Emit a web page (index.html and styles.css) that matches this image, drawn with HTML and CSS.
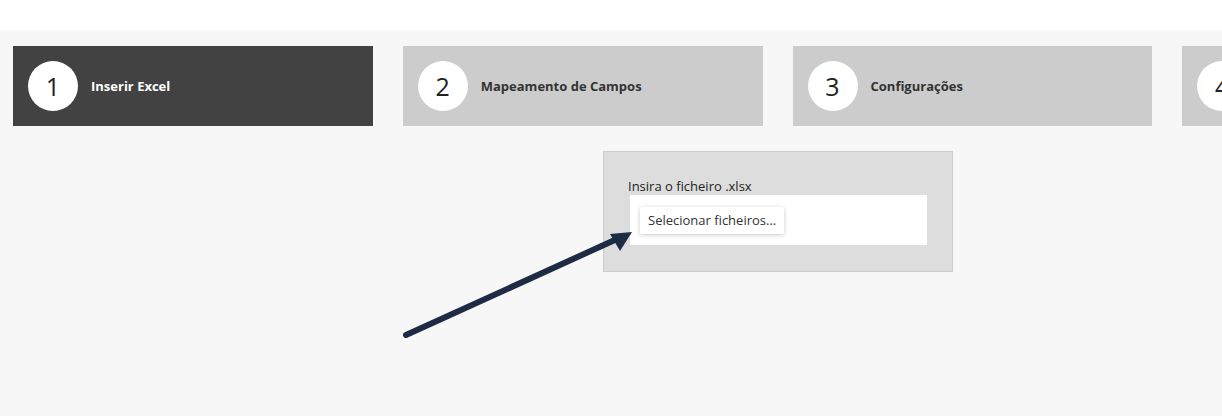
FILE: index.html
```html
<!DOCTYPE html>
<html lang="pt">
<head>
<meta charset="utf-8">
<link rel="stylesheet" href="styles.css">
</head>
<body>
<div class="topbar"></div>
<main class="main">
  <div class="steps">
    <div class="step active"><span class="num">1</span><span class="title">Inserir Excel</span></div>
    <div class="step"><span class="num">2</span><span class="title">Mapeamento de Campos</span></div>
    <div class="step"><span class="num">3</span><span class="title">Configurações</span></div>
    <div class="step"><span class="num">4</span></div>
  </div>
  <div class="panel">
    <label class="label">Insira o ficheiro .xlsx</label>
    <div class="input">
      <span class="btn">Selecionar ficheiros...</span>
    </div>
  </div>
</main>
<svg class="arrow" width="1222" height="416" viewBox="0 0 1222 416">
  <line x1="406" y1="335" x2="617" y2="239" stroke="#1e2b45" stroke-width="6" stroke-linecap="round"/>
  <polygon points="632,232 610,234 620,251" fill="#1e2b45"/>
</svg>
</body>
</html>
```
FILE: styles.css
```css
html, body {
  margin: 0;
  padding: 0;
}
body {
  width: 1222px;
  height: 416px;
  overflow: hidden;
  background: #f7f7f7;
  font-family: "Open Sans", "Liberation Sans", sans-serif;
  position: relative;
}
.topbar {
  height: 30px;
  background: #ffffff;
}
.main {
  padding: 16px 0 0 13px;
}
.steps {
  display: flex;
  gap: 30px;
  white-space: nowrap;
  overflow: hidden;
}
.step {
  flex: 0 0 359.75px;
  height: 80px;
  background: #cccccc;
  display: flex;
  align-items: center;
  padding-left: 15px;
  box-sizing: border-box;
  color: #333333;
}
.step.active {
  background: #424242;
  color: #ffffff;
}
.num {
  width: 50px;
  height: 50px;
  border-radius: 50%;
  background: #ffffff;
  color: #222222;
  font-size: 25px;
  display: flex;
  align-items: center;
  justify-content: center;
  flex-shrink: 0;
}
.title {
  margin-left: 13px;
  font-size: 13px;
  font-weight: 700;
}
.panel {
  margin: 25px 0 0 590px;
  width: 350px;
  box-sizing: border-box;
  border: 1px solid #cccccc;
  background: #dddddd;
  padding: 25px 24px 26px 24px;
}
.label {
  display: block;
  font-size: 13px;
  line-height: 18px;
  color: #222222;
}
.input {
  margin-left: 2px;
  width: 297px;
  height: 50px;
  background: #ffffff;
  box-sizing: border-box;
  padding: 12px 10px;
}
.btn {
  display: inline-block;
  height: 27px;
  line-height: 27px;
  padding: 0 8px;
  font-size: 13px;
  color: #333333;
  background: #ffffff;
  border-radius: 2px;
  box-shadow: 0 1px 4px rgba(0, 0, 0, 0.22);
}
.arrow {
  position: absolute;
  left: 0;
  top: 0;
  pointer-events: none;
}
```
